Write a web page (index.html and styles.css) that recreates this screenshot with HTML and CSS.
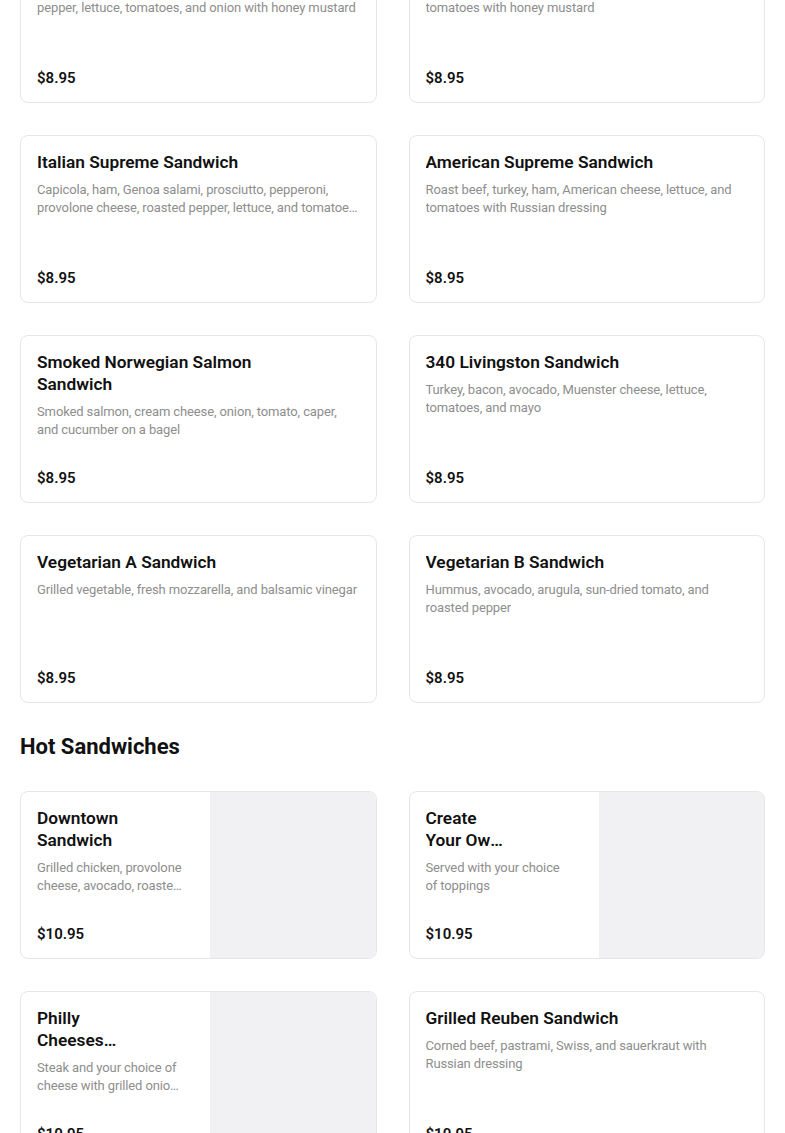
FILE: index.html
```html
<!DOCTYPE html>
<html lang="en">
<head>
<meta charset="utf-8">
<title>Menu</title>
<link rel="stylesheet" href="styles.css">
</head>
<body>
<main class="menu">
  <section class="section section-cut">
    <div class="grid">
      <article class="card">
        <h3 class="title">Downtown Club Sandwich</h3>
        <p class="desc">Grilled chicken, bacon, fresh mozzarella, roasted<br>pepper, lettuce, tomatoes, and onion with honey mustard</p>
        <div class="price">$8.95</div>
      </article>
      <article class="card">
        <h3 class="title">Turkey Club Sandwich</h3>
        <p class="desc">Turkey, bacon, Swiss cheese, lettuce, and<br>tomatoes with honey mustard</p>
        <div class="price">$8.95</div>
      </article>
      <article class="card">
        <h3 class="title">Italian Supreme Sandwich</h3>
        <p class="desc">Capicola, ham, Genoa salami, prosciutto, pepperoni, provolone cheese, roasted pepper, lettuce, and tomatoes with Italian dressing</p>
        <div class="price">$8.95</div>
      </article>
      <article class="card">
        <h3 class="title">American Supreme Sandwich</h3>
        <p class="desc">Roast beef, turkey, ham, American cheese, lettuce, and tomatoes with Russian dressing</p>
        <div class="price">$8.95</div>
      </article>
      <article class="card">
        <h3 class="title">Smoked Norwegian Salmon Sandwich</h3>
        <p class="desc">Smoked salmon, cream cheese, onion, tomato, caper, and cucumber on a bagel</p>
        <div class="price">$8.95</div>
      </article>
      <article class="card">
        <h3 class="title">340 Livingston Sandwich</h3>
        <p class="desc">Turkey, bacon, avocado, Muenster cheese, lettuce, tomatoes, and mayo</p>
        <div class="price">$8.95</div>
      </article>
      <article class="card">
        <h3 class="title">Vegetarian A Sandwich</h3>
        <p class="desc">Grilled vegetable, fresh mozzarella, and balsamic vinegar</p>
        <div class="price">$8.95</div>
      </article>
      <article class="card">
        <h3 class="title">Vegetarian B Sandwich</h3>
        <p class="desc">Hummus, avocado, arugula, sun-dried tomato, and roasted pepper</p>
        <div class="price">$8.95</div>
      </article>
    </div>
  </section>

  <section class="section">
    <h2 class="section-title">Hot Sandwiches</h2>
    <div class="grid">
      <article class="card card-photo">
        <div class="card-body">
          <h3 class="title">Downtown Sandwich</h3>
          <p class="desc">Grilled chicken, provolone cheese, avocado, roasted pepper, and onion</p>
          <div class="price">$10.95</div>
        </div>
        <div class="photo"></div>
      </article>
      <article class="card card-photo">
        <div class="card-body">
          <h3 class="title">Create Your Own Sandwich</h3>
          <p class="desc">Served with your choice of toppings</p>
          <div class="price">$10.95</div>
        </div>
        <div class="photo"></div>
      </article>
      <article class="card card-photo">
        <div class="card-body">
          <h3 class="title">Philly Cheesesteak</h3>
          <p class="desc">Steak and your choice of cheese with grilled onions and peppers</p>
          <div class="price">$10.95</div>
        </div>
        <div class="photo"></div>
      </article>
      <article class="card">
        <h3 class="title">Grilled Reuben Sandwich</h3>
        <p class="desc">Corned beef, pastrami, Swiss, and sauerkraut with Russian dressing</p>
        <div class="price">$10.95</div>
      </article>
    </div>
  </section>
</main>
</body>
</html>
```

FILE: styles.css
```css
* {
  box-sizing: border-box;
}

html, body {
  margin: 0;
  padding: 0;
  background: #ffffff;
}

body {
  font-family: Roboto, "Liberation Sans", Arial, sans-serif;
  color: #111111;
  overflow: hidden;
}

.menu {
  padding: 0 20px;
}

.section-cut {
  margin-top: -65px;
}

.section + .section {
  margin-top: 27px;
}

.section-title {
  margin: 0 0 27px;
  font-size: 22px;
  line-height: 34px;
  font-weight: 700;
  color: #111111;
}

.grid {
  display: grid;
  grid-template-columns: 1fr 1fr;
  column-gap: 32px;
  row-gap: 32px;
}

.card {
  height: 168px;
  border: 1px solid #e6e6e6;
  border-radius: 8px;
  background: #ffffff;
  padding: 15px 16px 14px;
  display: flex;
  flex-direction: column;
  overflow: hidden;
}

.title {
  margin: 0;
  max-width: 250px;
  font-size: 17.3px;
  line-height: 22px;
  font-weight: 600;
  color: #111111;
  display: -webkit-box;
  -webkit-box-orient: vertical;
  -webkit-line-clamp: 2;
  overflow: hidden;
}

.desc {
  margin: 8px 0 0;
  font-size: 13px;
  line-height: 18px;
  letter-spacing: -0.12px;
  color: #8e8e8e;
  display: -webkit-box;
  -webkit-box-orient: vertical;
  -webkit-line-clamp: 2;
  overflow: hidden;
}

.price {
  margin-top: auto;
  font-size: 15px;
  line-height: 20px;
  font-weight: 600;
  color: #111111;
}

.card-photo {
  padding: 0;
  flex-direction: row;
}

.card-body {
  width: 189px;
  flex: none;
  padding: 15px 26px 14px 16px;
  display: flex;
  flex-direction: column;
}

.card-body .title {
  max-width: 82px;
  overflow-wrap: anywhere;
}

.photo {
  flex: 1;
  background: #f1f1f3;
}
```
